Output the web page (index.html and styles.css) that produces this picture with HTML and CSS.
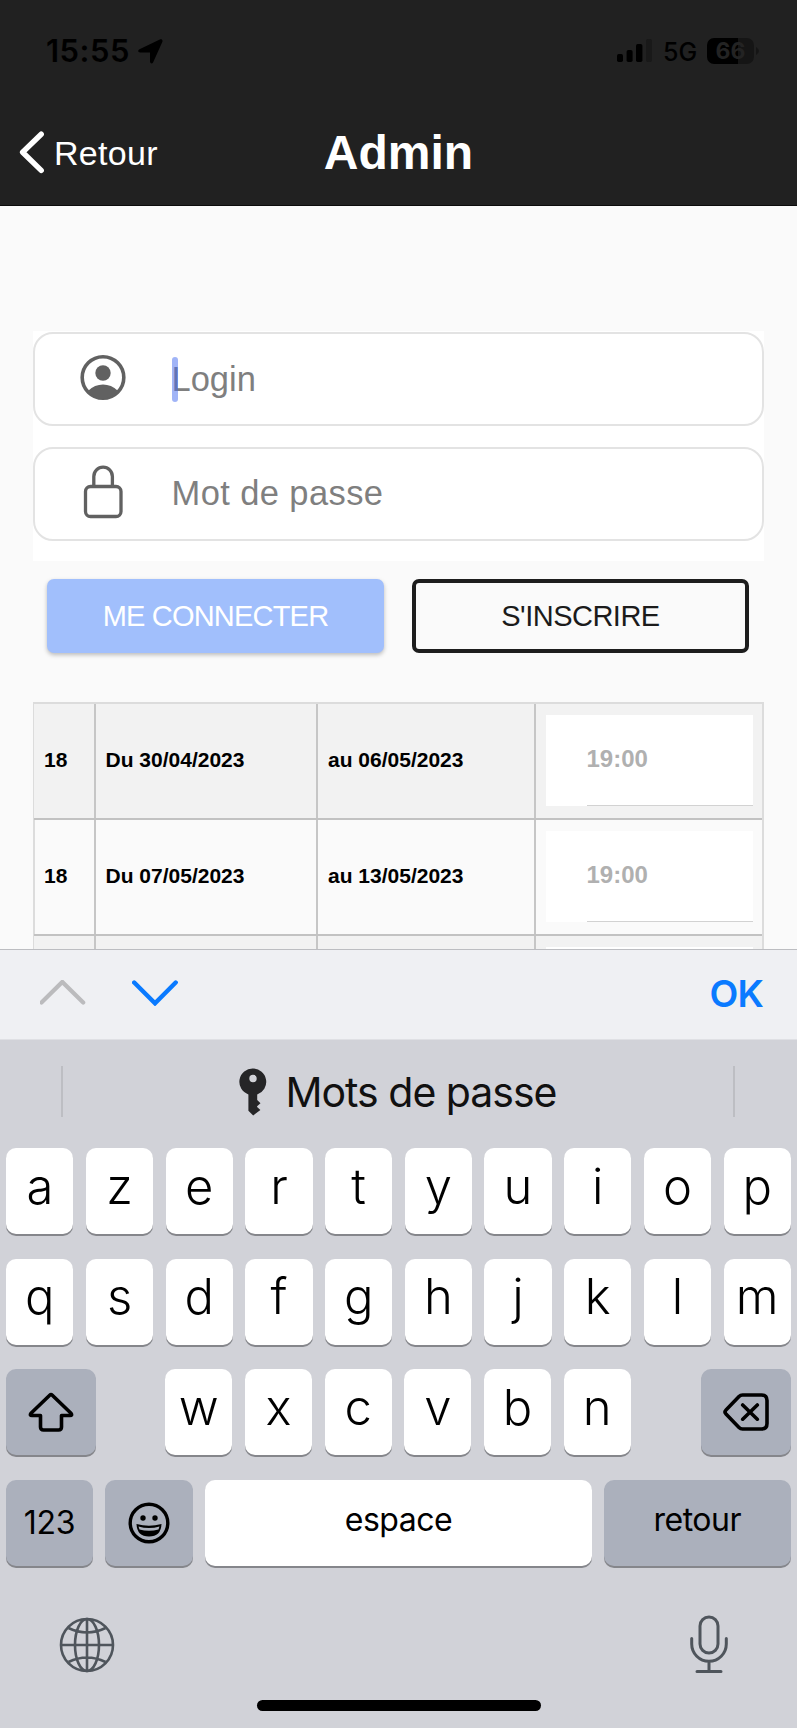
FILE: index.html
```html
<!DOCTYPE html>
<html lang="fr">
<head>
<meta charset="utf-8">
<title>Admin</title>
<link rel="stylesheet" href="styles.css">
</head>
<body>
<div class="screen">
  <header class="header">
    <div class="status">
      <span class="time">15:55</span>
      <svg class="location" width="25" height="25" viewBox="0 0 25 25"><path d="M1.500 10.200 21.800.6c1.800-.8 3.300.5 2.500 2.400L15.200 23.200c-.8 1.800-3.200 1.500-3.200-.6V13.400H2.300C-.2 13.400-.5 11.200 1.500 10.200z"/></svg>
      <div class="status-right">
        <svg class="signal" width="36" height="24" viewBox="0 0 36 24"><rect x="0" y="15" width="6" height="8" rx="1.700"/><rect x="9.600" y="11" width="6" height="12" rx="1.700"/><rect x="19" y="5" width="6.400" height="18" rx="1.700"/><rect x="29" y="0" width="6" height="23" rx="1.700" fill="#191919"/></svg>
        <span class="network">5G</span>
        <span class="battery">66</span>
        <svg class="nub" width="3" height="8" viewBox="0 0 3 8"><path d="M0 0Q3 2 3 4T0 8z" fill="#151515"/></svg>
      </div>
    </div>
    <div class="navbar">
      <a class="back">
        <svg width="26" height="44" viewBox="0 0 26 44"><path d="M23.200 3.200 4.600 21.200 23.200 39.400" fill="none" stroke="#fff" stroke-width="5.400" stroke-linecap="round" stroke-linejoin="round"/></svg>
        <span class="back-label">Retour</span>
      </a>
      <h1 class="title">Admin</h1>
      <span></span>
    </div>
  </header>

  <main class="page">
    <form class="login">
      <label class="field">
        <svg class="field-icon" width="46" height="54" viewBox="0 0 46 54"><circle cx="23" cy="26.500" r="20.800" fill="none" stroke="#616161" stroke-width="3.600"/><circle cx="23" cy="22" r="7.700" fill="#616161"/><path d="M8.500 39.500C16 31.500 30 31.500 37.500 39.500 30.500 50.500 15.500 50.500 8.500 39.500z" fill="#616161"/></svg>
        <span class="placeholder login-text">Login<i class="caret"></i></span>
      </label>
      <label class="field">
        <svg class="field-icon" width="46" height="54" viewBox="0 0 46 54" fill="none" stroke="#616161" stroke-width="3.300"><rect x="5.500" y="21.500" width="35.500" height="30" rx="5"/><path d="M13.800 23V11.500a9.300 9.300 0 0 1 18.600 0V23"/></svg>
        <span class="placeholder pass-text">Mot de passe</span>
      </label>
    </form>
    <div class="actions">
      <button class="btn btn-primary">ME CONNECTER</button>
      <button class="btn btn-outline">S'INSCRIRE</button>
    </div>
    <div class="table">
      <div class="row odd"><div>18</div><div>Du 30/04/2023</div><div>au 06/05/2023</div><div><span class="hour">19:00</span></div></div>
      <div class="row"><div>18</div><div>Du 07/05/2023</div><div>au 13/05/2023</div><div><span class="hour">19:00</span></div></div>
      <div class="row odd"><div></div><div></div><div></div><div><span class="hour"></span></div></div>
    </div>
  </main>

  <div class="toolbar">
    <svg width="46" height="26" viewBox="0 0 46 26"><path d="M1.500 22.500 22.300 1.900 43.200 22.500" fill="none" stroke="#bbbbbd" stroke-width="4.200" stroke-linecap="round" stroke-linejoin="miter"/></svg>
    <svg width="46" height="26" viewBox="0 0 46 26"><path d="M2.200 2.500 23 23.300 43.700 2.500" fill="none" stroke="#0a7aff" stroke-width="4.400" stroke-linecap="round"/></svg>
    <span class="ok">OK</span>
  </div>

  <section class="keyboard">
    <div class="suggestions">
      <i class="sep"></i>
      <div class="suggest">
        <svg width="28" height="48" viewBox="0 0 28 48"><path fill-rule="evenodd" fill="#252527" d="M14 0.500a13.300 13.300 0 0 1 4.200 25.900V32l3.300 3.200-3.400 3.100v.8l3.300 2.900-7.200 5.400-4.800-4.700V26.400A13.300 13.300 0 0 1 14 .5zM14 6.800a3.700 3.700 0 1 0 0 7.400 3.700 3.700 0 0 0 0-7.400z"/></svg>
        <span class="suggest-text">Mots de passe</span>
      </div>
      <i class="sep"></i>
    </div>
    <div class="keys"><b>a</b><b>z</b><b>e</b><b>r</b><b>t</b><b>y</b><b>u</b><b>i</b><b>o</b><b>p</b></div>
    <div class="keys"><b>q</b><b>s</b><b>d</b><b>f</b><b>g</b><b>h</b><b>j</b><b>k</b><b>l</b><b>m</b></div>
    <div class="keys third">
      <b class="dark"><svg width="46" height="40" viewBox="0 0 46 40"><path d="M21.700 3.200q1.300-1.300 2.600 0L43 21.200q1.600 2.300-1 2.300H33.500V35q0 3-3 3h-15q-3 0-3-3V23.500H4q-2.600 0-1-2.300z" fill="none" stroke="#000" stroke-width="3.600" stroke-linejoin="round"/></svg></b>
      <b>w</b><b>x</b><b>c</b><b>v</b><b>b</b><b>n</b>
      <b class="dark"><svg width="46" height="40" viewBox="0 0 46 40"><path d="M19.500 3h19q5.500 0 5.500 5.500v23q0 5.500-5.500 5.500h-19q-2 0-3.500-1.500L3 22q-2-2 0-4L16 4.500Q17.500 3 19.500 3zM19.700 13l14.600 14.200M34.300 13 19.700 27.200" fill="none" stroke="#000" stroke-width="3.600" stroke-linecap="round"/></svg></b>
    </div>
    <div class="keys fourth">
      <b class="dark num">123</b>
      <b class="dark"><svg width="42" height="42" viewBox="0 0 42 42"><circle cx="21" cy="21" r="18.800" fill="none" stroke="#000" stroke-width="3.400"/><circle cx="15" cy="16" r="2.700"/><circle cx="27" cy="16" r="2.700"/><path d="M8.500 22q12.500 3.500 25 0Q33 34.500 21 34.500T8.500 22z"/><path d="M10.500 24.400q10.500 3 21 0l-1 3q-9.500 2.600-19 0z" fill="#abb0bc"/></svg></b>
      <b class="word">espace</b>
      <b class="dark word">retour</b>
    </div>
    <div class="bottom">
      <svg width="56" height="56" viewBox="0 0 56 56" fill="none" stroke="#4f555c" stroke-width="2.600"><circle cx="28" cy="28" r="26"/><ellipse cx="28" cy="28" rx="12" ry="26"/><path d="M28 2v52M2 28h52M9.500 11q18.500 9 37 0M9.500 45q18.500-9 37 0"/></svg>
      <svg width="40" height="60" viewBox="0 0 40 60" fill="none" stroke="#4f555c" stroke-width="3" stroke-linecap="round"><rect x="11" y="2" width="18" height="36" rx="9"/><path d="M2.700 23.500v5.500a17.300 17.300 0 0 0 34.600 0v-5.500M20 46.500v10M8 56.500h24"/></svg>
    </div>
    <div class="home"></div>
  </section>
</div>
</body>
</html>
```
FILE: styles.css
```css
* { box-sizing: border-box; }
body { margin: 0; font-family: "Liberation Sans", Arial, sans-serif; }
svg { display: block; flex: none; }
.screen { width: 797px; height: 1728px; overflow: hidden; background: #fafafa; }

.header { height: 206px; background: #212121; border-bottom: 1px solid #0c0c0c; display: flex; flex-direction: column; }
.status { height: 100px; display: flex; align-items: center; padding: 2px 38px 0 46px; font-family: Inter, sans-serif; color: #000; }
.time { font-size: 31px; font-weight: 600; width: 92px; letter-spacing: .5px; white-space: nowrap; padding-bottom: 1px; }
.status-right { margin-left: auto; display: flex; align-items: center; }
.network { font-size: 25px; font-weight: 500; margin-left: 10px; width: 44px; padding-top: 1px; }
.battery { width: 47px; height: 26px; border-radius: 7px; background: linear-gradient(90deg, #000 66%, #151515 66%); color: #232323; font-size: 23px; font-weight: 700; line-height: 26px; text-align: center; }
.nub { margin-left: 2px; }

.navbar { height: 105px; display: grid; grid-template-columns: 1fr auto 1fr; align-items: center; }
.back { display: flex; align-items: center; padding-left: 18px; color: #fff; }
.back-label { font-size: 34px; margin-left: 10px; padding-top: 2px; letter-spacing: .3px; }
.title { margin: 0; font-size: 48px; font-weight: 700; color: #fff; }

.page { height: 743px; padding: 125px 33px 0; overflow: hidden; }
.login { background: #fff; height: 230px; padding-top: 1px; display: flex; flex-direction: column; gap: 20.500px; width: 731px; }
.field { height: 94px; border: 2px solid #e3e3e3; border-radius: 20px; display: flex; align-items: center; padding: 0 45px; background: #fff; }
.field-icon { margin-top: -3px; }
.placeholder { font-size: 34.500px; color: #7f7f7f; margin-left: 45.500px; position: relative; }
.pass-text { letter-spacing: .4px; }
.caret { position: absolute; left: 0; top: -3px; width: 6px; height: 45px; border-radius: 3px; background: rgba(66, 105, 240, .5); }

.actions { display: flex; gap: 28px; padding: 18px 14px 0; width: 731px; }
.btn { width: 337px; height: 74px; border-radius: 7px; font: 29px "Liberation Sans", Arial, sans-serif; letter-spacing: -.8px; padding: 0; }
.btn-primary { background: #a1bffc; color: #fff; border: 0; box-shadow: 0 2px 4px rgba(0, 0, 0, .25); }
.btn-outline { background: #fafafa; color: #1b1b1b; border: 4px solid #1d1d1d; letter-spacing: -.5px; }

.table { margin-top: 48.500px; width: 731px; border: 2px solid #dcdcdc; border-bottom: 0; }
.row { display: grid; grid-template-columns: 61.500px 222.500px 217.500px 1fr; height: 116px; border-bottom: 2px solid #c2c2c2; margin-left: -1px; }
.row.odd { background: #f2f2f2; }
.row > div { border-right: 2px solid #c6c6c6; display: flex; align-items: center; padding: 0 0 2px 10px; font-size: 21px; font-weight: 700; color: #000; white-space: nowrap; }
.row > div:last-child { border-right: 0; padding: 11px 10px; }
.hour { width: 207px; height: 91px; background: linear-gradient(#d2d2d2, #d2d2d2) 41px 100% / 166px 1px no-repeat #fff; padding-left: 41px; line-height: 88px; font-size: 24px; color: #b0b0b0; }

.toolbar { height: 91px; background: #eff0f3; border-top: 1px solid #bcbdc1; border-bottom: 1px solid #dfe0e4; display: flex; align-items: center; gap: 46px; padding: 0 34px 3px 40px; }
.ok { margin-left: auto; font-family: Inter, sans-serif; font-size: 37.500px; font-weight: 600; color: #0a7aff; letter-spacing: -.8px; padding-top: 1px; }

.keyboard { height: 688px; background: #d1d2d8; font-family: Inter, sans-serif; }
.suggestions { height: 108px; display: flex; justify-content: space-between; padding: 26px 62px 0 61px; }
.sep { width: 2px; height: 51px; background: #bdbec3; }
.suggest { display: flex; height: 51px; align-items: center; }
.suggest-text { font-size: 41px; color: #111; margin-left: 18px; letter-spacing: -1px; white-space: nowrap; }
.keys { display: grid; grid-template-columns: repeat(10, 1fr); column-gap: 12.600px; padding: 0 6.300px; height: 110.500px; }
.keys b { height: 86px; border-radius: 10px; background: #fff; box-shadow: 0 2px 0 #85868b; display: flex; align-items: center; justify-content: center; font-size: 49px; font-weight: 350; color: #000; padding-bottom: 9.500px; }
.keys .dark { background: #abb0bc; padding-bottom: 0; }
.third { display: flex; }
.third b { width: 67.100px; }
.third .dark { width: 90px; }
.third .dark:first-child { margin-right: 56.400px; }
.third .dark:last-child { margin-left: auto; }
.fourth { grid-template-columns: 86.500px 88px 386.500px 1fr; column-gap: 12.200px; }
.keys .num { font-size: 32px; font-weight: 400; letter-spacing: -.3px; padding-bottom: 1px; }
.keys .word { font-size: 32px; font-weight: 400; padding-bottom: 6px; letter-spacing: -.5px; }
.bottom { display: flex; justify-content: space-between; align-items: center; padding: 0 68px 0 58.500px; height: 62px; margin-top: 24px; }
.home { width: 284px; height: 11px; border-radius: 6px; background: #000; margin: 24px auto 0; }
```
